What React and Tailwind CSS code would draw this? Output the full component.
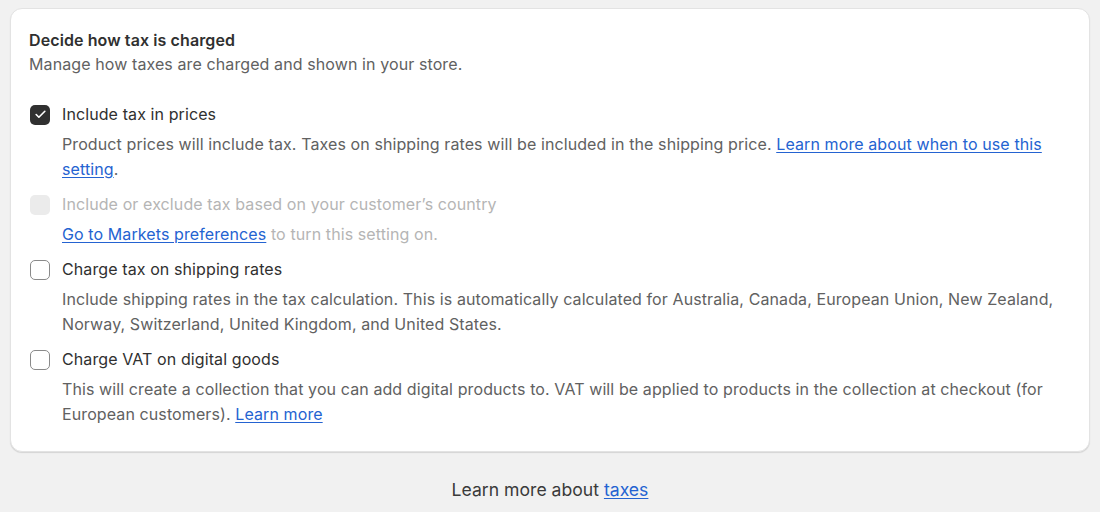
import { Check } from 'lucide-react'

const options = [
  {
    label: 'Include tax in prices',
    checked: true,
    help: (
      <>
        Product prices will include tax. Taxes on shipping rates will be included in the shipping price.{' '}
        <a href="#" className="text-[#2463d1] underline underline-offset-2">Learn more about when to use this setting</a>.
      </>
    ),
  },
  {
    label: 'Include or exclude tax based on your customer’s country',
    disabled: true,
    help: (
      <>
        <a href="#" className="text-[#2463d1] underline underline-offset-2">Go to Markets preferences</a> to turn this setting on.
      </>
    ),
  },
  {
    label: 'Charge tax on shipping rates',
    help: 'Include shipping rates in the tax calculation. This is automatically calculated for Australia, Canada, European Union, New Zealand, Norway, Switzerland, United Kingdom, and United States.',
  },
  {
    label: 'Charge VAT on digital goods',
    help: (
      <>
        This will create a collection that you can add digital products to. VAT will be applied to products in the collection at checkout (for European customers).{' '}
        <a href="#" className="text-[#2463d1] underline underline-offset-2">Learn more</a>
      </>
    ),
  },
]

export default function App() {
  return (
    <div className="min-h-[512px] bg-[#f1f1f1] pt-2 px-[10px] font-['Inter','Liberation_Sans',sans-serif] text-[16px] tracking-[0.1px] leading-[25px] text-[#303030]">
      <div className="rounded-xl bg-white border border-[#e3e3e3] shadow-[0_1px_1px_rgba(0,0,0,0.12)] px-[18px] pt-[19px] pb-6">
        <h2 className="font-semibold leading-[24px]">Decide how tax is charged</h2>
        <p className="text-[#616161] leading-[24px]">Manage how taxes are charged and shown in your store.</p>

        <div className="mt-[26px] flex flex-col gap-[10px]">
          {options.map((o) => (
            <Option key={o.label} {...o} />
          ))}
        </div>
      </div>

      <p className="mt-[25px] text-center text-[17.6px] tracking-normal text-[#3a3a3a]">
        Learn more about <a href="#" className="text-[#2463d1] underline underline-offset-2">taxes</a>
      </p>
    </div>
  )
}

function Option({ label, help, checked, disabled }) {
  return (
    <div>
      <div className="flex items-center gap-3">
        <Box checked={checked} disabled={disabled} />
        <span className={disabled ? 'text-[#b5b5b5]' : ''}>{label}</span>
      </div>
      <div className={`pl-[33px] mt-[5px] ${disabled ? 'text-[#b5b5b5]' : 'text-[#616161]'}`}>{help}</div>
    </div>
  )
}

function Box({ checked, disabled }) {
  if (checked) {
    return (
      <span className="ml-px w-5 h-5 rounded-[5px] bg-[#303030] flex items-center justify-center shrink-0">
        <Check size={13} strokeWidth={3} className="text-white" />
      </span>
    )
  }
  if (disabled) {
    return <span className="ml-px w-5 h-5 rounded-[5px] bg-[#ebebeb] shrink-0" />
  }
  return <span className="ml-px w-5 h-5 rounded-[5px] border border-[#8a8a8a] bg-white shrink-0" />
}
